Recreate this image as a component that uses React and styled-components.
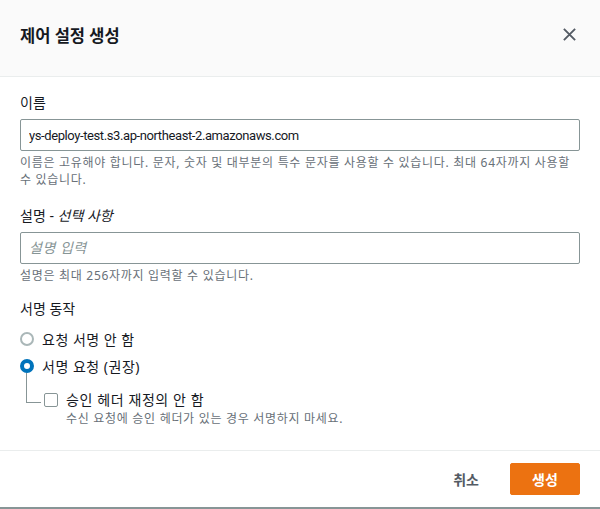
import styled, { createGlobalStyle } from 'styled-components';

const Global = createGlobalStyle`
  html, body {
    margin: 0;
    padding: 0;
    background: #ffffff;
  }
  body {
    font-family: "Noto Sans", "Noto Sans CJK KR", sans-serif;
    color: #16191f;
  }
`;

const Modal = styled.div`
  width: 600px;
  height: 509px;
  box-sizing: border-box;
  display: flex;
  flex-direction: column;
  background: #ffffff;
  border-bottom: 2px solid #879596;
`;

const Header = styled.div`
  height: 77px;
  box-sizing: border-box;
  display: flex;
  align-items: center;
  justify-content: space-between;
  padding: 0 20px 6px 20px;
  background: #fafafa;
  border-bottom: 1px solid #eaeded;
`;

const Title = styled.h2`
  margin: 0;
  font-size: 16.5px;
  font-weight: 700;
  color: #16191f;
`;

const Close = styled.button`
  border: none;
  background: none;
  padding: 0;
  width: 22px;
  height: 22px;
  display: flex;
  align-items: center;
  justify-content: center;
  cursor: pointer;
  margin-top: -2px;
`;

const Body = styled.div`
  flex: 1;
  padding: 15px 20px 0 20px;
  display: flex;
  flex-direction: column;
`;

const Field = styled.div`
  display: flex;
  flex-direction: column;
  margin-bottom: ${p => p.gap || 0}px;
`;

const Label = styled.label`
  font-size: 14px;
  line-height: 22px;
  color: #16191f;
  margin-bottom: 5px;
  em {
    font-style: italic;
  }
`;

const Input = styled.input`
  height: 32px;
  box-sizing: border-box;
  border: 1px solid #879596;
  border-radius: 2px;
  padding: 0 8px;
  font-family: Roboto, "Noto Sans CJK KR", sans-serif;
  font-size: 13px;
  letter-spacing: -0.4px;
  color: #16191f;
  outline: none;
  &::placeholder {
    font-family: "Noto Sans", "Noto Sans CJK KR", sans-serif;
    font-size: 14px;
    color: #879596;
    font-style: italic;
    letter-spacing: 0.5px;
  }
`;

const Hint = styled.div`
  font-size: 12px;
  line-height: 17px;
  color: #687078;
  margin-top: 3px;
  letter-spacing: 0.7px;
`;

const Option = styled.div`
  display: flex;
  align-items: center;
  gap: 8px;
  height: 27px;
  font-size: 14px;
  color: #16191f;
  letter-spacing: 0.5px;
`;

const Radio = styled.span`
  width: 14px;
  height: 14px;
  box-sizing: border-box;
  border-radius: 50%;
  border: ${p => (p.checked ? '4px solid #0073bb' : '2px solid #aab7b8')};
  background: #ffffff;
  flex-shrink: 0;
`;

const Nested = styled.div`
  position: relative;
  padding-left: 24px;
  margin-top: 10px;
`;

const Connector = styled.span`
  position: absolute;
  left: 6px;
  top: -16px;
  width: 14px;
  height: 29px;
  border-left: 1px solid #879596;
  border-bottom: 1px solid #879596;
`;

const CheckRow = styled.div`
  display: flex;
  align-items: flex-start;
  gap: 8px;
`;

const Checkbox = styled.span`
  width: 14px;
  height: 14px;
  box-sizing: border-box;
  border: 1px solid #879596;
  border-radius: 2px;
  margin-top: 4px;
  flex-shrink: 0;
`;

const CheckText = styled.div`
  display: flex;
  flex-direction: column;
  font-size: 14px;
  line-height: 22px;
  letter-spacing: 0.6px;
  span {
    font-size: 12px;
    line-height: 16px;
    color: #687078;
    letter-spacing: 0.7px;
  }
`;

const Footer = styled.div`
  height: 56px;
  border-top: 1px solid #eaeded;
  display: flex;
  align-items: center;
  justify-content: flex-end;
  gap: 30px;
  padding: 0 20px;
`;

const Button = styled.button`
  font-family: inherit;
  font-size: 14px;
  font-weight: 700;
  border-radius: 2px;
  cursor: pointer;
  height: 32px;
  border: 1px solid ${p => (p.primary ? '#ec7211' : 'transparent')};
  background: ${p => (p.primary ? '#ec7211' : 'transparent')};
  color: ${p => (p.primary ? '#ffffff' : '#545b64')};
  min-width: ${p => (p.primary ? '70px' : 'auto')};
  padding: ${p => (p.primary ? '0 20px' : '0')};
`;

export default function App() {
  return (
    <>
      <Global />
      <Modal>
        <Header>
          <Title>제어 설정 생성</Title>
          <Close aria-label="닫기">
            <svg width="15" height="15" viewBox="0 0 16 16">
              <path d="M2 2 L14 14 M14 2 L2 14" stroke="#545b64" strokeWidth="2" />
            </svg>
          </Close>
        </Header>
        <Body>
          <Field gap={17}>
            <Label>이름</Label>
            <Input defaultValue="ys-deploy-test.s3.ap-northeast-2.amazonaws.com" />
            <Hint>이름은 고유해야 합니다. 문자, 숫자 및 대부분의 특수 문자를 사용할 수 있습니다. 최대 64자까지 사용할 수 있습니다.</Hint>
          </Field>
          <Field gap={14}>
            <Label>설명 - <em>선택 사항</em></Label>
            <Input placeholder="설명 입력" />
            <Hint>설명은 최대 256자까지 입력할 수 있습니다.</Hint>
          </Field>
          <Field>
            <Label>서명 동작</Label>
            <Option><Radio />요청 서명 안 함</Option>
            <Option><Radio checked />서명 요청 (권장)</Option>
            <Nested>
              <Connector />
              <CheckRow>
                <Checkbox />
                <CheckText>
                  승인 헤더 재정의 안 함
                  <span>수신 요청에 승인 헤더가 있는 경우 서명하지 마세요.</span>
                </CheckText>
              </CheckRow>
            </Nested>
          </Field>
        </Body>
        <Footer>
          <Button>취소</Button>
          <Button primary>생성</Button>
        </Footer>
      </Modal>
    </>
  );
}
